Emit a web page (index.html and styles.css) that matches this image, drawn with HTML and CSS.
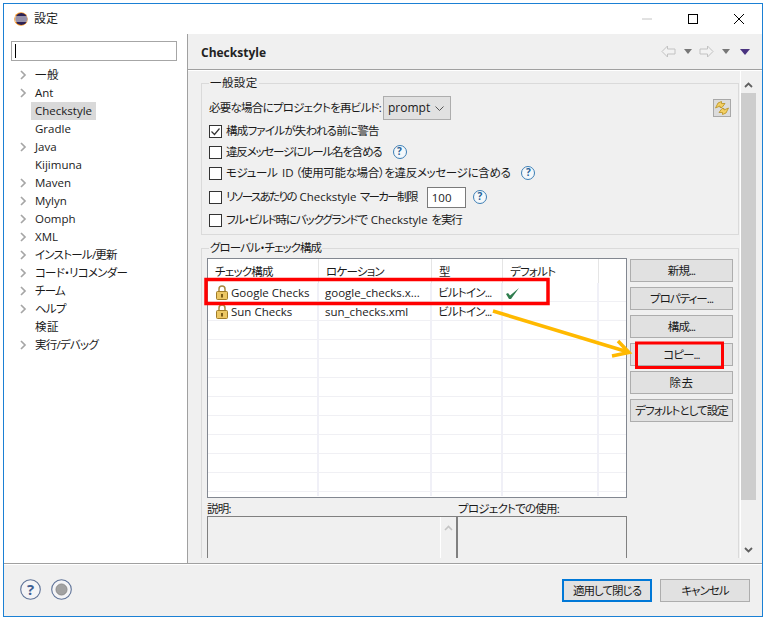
FILE: index.html
```html
<!DOCTYPE html>
<html lang="ja">
<head>
<meta charset="utf-8">
<title>設定</title>
<link rel="stylesheet" href="styles.css">
</head>
<body>
<div class="window">
  <header class="titlebar">
    <svg class="app-icon" viewBox="0 0 14 14"><circle cx="7" cy="7" r="6.8" fill="#f7941e"/><circle cx="7.3" cy="7" r="6" fill="#2c2255"/><path d="M1 5h12.4M1 7h12.6M1 9h12.4" stroke="#fff" stroke-width="1"/></svg>
    <span class="title">設定</span>
    <div class="controls">
      <span class="ctl"><svg viewBox="0 0 12 12"><path d="M1 6h10" stroke="#c4c4c4"/></svg></span>
      <span class="ctl"><svg viewBox="0 0 12 12"><rect x="1.5" y="1.5" width="9" height="9" fill="none" stroke="#000"/></svg></span>
      <span class="ctl"><svg viewBox="0 0 12 12"><path d="M1 1l10 10M11 1L1 11" stroke="#000" fill="none"/></svg></span>
    </div>
  </header>
  <div class="main">
    <aside class="sidebar">
      <div class="filter"><span class="caret"></span></div>
      <ul class="tree">
        <li class="node has"><svg class="chev" viewBox="0 0 7 10"><path d="M1 1l4 4-4 4" /></svg><span class="k">一般</span></li>
        <li class="node has"><svg class="chev" viewBox="0 0 7 10"><path d="M1 1l4 4-4 4" /></svg><span>Ant</span></li>
        <li class="node"><span class="sel">Checkstyle</span></li>
        <li class="node"><span>Gradle</span></li>
        <li class="node has"><svg class="chev" viewBox="0 0 7 10"><path d="M1 1l4 4-4 4" /></svg><span>Java</span></li>
        <li class="node"><span>Kijimuna</span></li>
        <li class="node has"><svg class="chev" viewBox="0 0 7 10"><path d="M1 1l4 4-4 4" /></svg><span>Maven</span></li>
        <li class="node has"><svg class="chev" viewBox="0 0 7 10"><path d="M1 1l4 4-4 4" /></svg><span>Mylyn</span></li>
        <li class="node has"><svg class="chev" viewBox="0 0 7 10"><path d="M1 1l4 4-4 4" /></svg><span>Oomph</span></li>
        <li class="node has"><svg class="chev" viewBox="0 0 7 10"><path d="M1 1l4 4-4 4" /></svg><span>XML</span></li>
        <li class="node has"><svg class="chev" viewBox="0 0 7 10"><path d="M1 1l4 4-4 4" /></svg><span class="j">インストール/更新</span></li>
        <li class="node has"><svg class="chev" viewBox="0 0 7 10"><path d="M1 1l4 4-4 4" /></svg><span class="j">コード・リコメンダー</span></li>
        <li class="node has"><svg class="chev" viewBox="0 0 7 10"><path d="M1 1l4 4-4 4" /></svg><span class="j">チーム</span></li>
        <li class="node has"><svg class="chev" viewBox="0 0 7 10"><path d="M1 1l4 4-4 4" /></svg><span class="j">ヘルプ</span></li>
        <li class="node"><span class="k">検証</span></li>
        <li class="node has"><svg class="chev" viewBox="0 0 7 10"><path d="M1 1l4 4-4 4" /></svg><span class="j">実行/デバッグ</span></li>
      </ul>
    </aside>
    <section class="panel">
      <div class="panel-head">
        <h1>Checkstyle</h1>
        <div class="nav">
          <svg class="nav-arrow" viewBox="0 0 15 13"><path d="M6.5 1L1 6.5 6.5 12V9H14V4H6.5z" /></svg>
          <svg class="nav-drop" viewBox="0 0 8 5"><path d="M0 0h8L4 5z"/></svg>
          <svg class="nav-arrow right" viewBox="0 0 15 13"><path d="M8.5 1L14 6.5 8.5 12V9H1V4H8.5z" /></svg>
          <svg class="nav-drop" viewBox="0 0 8 5"><path d="M0 0h8L4 5z"/></svg>
          <svg class="nav-menu" viewBox="0 0 10 6"><path d="M0 0h10L5 6z"/></svg>
        </div>
      </div>
      <div class="panel-body">
        <div class="scroll-area">
          <fieldset class="group">
            <legend class="k">一般設定</legend>
            <div class="row row-select">
              <label class="j prompt-label">必要な場合にプロジェクトを再ビルド:</label>
              <span class="select">prompt<svg viewBox="0 0 9 5"><path d="M.5.5l4 4 4-4" fill="none" stroke="#555"/></svg></span>
              <span class="refresh"><svg viewBox="0 0 16 16"><path d="M1.500 8L4 3l3.500-1.500v2H11L8 7.500H6V6z" fill="#f3cf63" stroke="#b8901f" stroke-width=".8"/><path d="M14.500 8L12 13l-3.500 1.500v-2H5L8 8.500h2V10z" fill="#f3cf63" stroke="#b8901f" stroke-width=".8"/></svg></span>
            </div>
            <div class="row"><span class="cb checked"><svg viewBox="0 0 11 11"><path d="M1.500 5.500l3 3 5-6" fill="none" stroke="#333" stroke-width="1.200"/></svg></span><span class="j">構成ファイルが失われる前に警告</span></div>
            <div class="row"><span class="cb"></span><span class="j tight">違反メッセージにルール名を含める</span><span class="q q1">?</span></div>
            <div class="row"><span class="cb"></span><span class="j loose">モジュール <span class="l">ID</span>（使用可能な場合）を違反メッセージに含める</span><span class="q q1">?</span></div>
            <div class="row row-limit"><span class="cb"></span><span class="j tighter">リソースあたりの <span class="l">Checkstyle</span> マーカー制限</span><span class="num">100</span><span class="q q2">?</span></div>
            <div class="row row-last"><span class="cb"></span><span class="j snug">フル・ビルド時にバックグランドで <span class="l">Checkstyle</span> を実行</span></div>
          </fieldset>
          <fieldset class="group group-global">
            <legend class="snug">グローバル・チェック構成</legend>
            <div class="table-row">
              <div class="table-box">
                <table>
                  <colgroup><col class="c1"><col class="c2"><col class="c3"><col class="c4"><col class="c5"></colgroup>
                  <thead><tr><th class="j">チェック構成</th><th class="j">ロケーション</th><th class="j">型</th><th class="j">デフォルト</th><th></th></tr></thead>
                  <tbody>
                    <tr><td><span class="name"><svg class="lock" viewBox="0 0 12 15"><path d="M3 7V4a3 3 0 0 1 6 0v3" fill="none" stroke="#a8893f" stroke-width="1.500"/><rect x=".5" y="6.500" width="11" height="8" rx="1" fill="#ecc764" stroke="#a07c28"/><rect x="5" y="9" width="2" height="3.500" fill="#7a5c18"/></svg>Google Checks</span></td><td>google_checks.x...</td><td class="j">ビルトイン...</td><td><svg class="check" viewBox="0 0 15 13"><path d="M1 7l3 5h2L14 1 5 8.500 3 6z" fill="#2f7d4f"/></svg></td><td></td></tr>
                    <tr><td><span class="name"><svg class="lock" viewBox="0 0 12 15"><path d="M3 7V4a3 3 0 0 1 6 0v3" fill="none" stroke="#a8893f" stroke-width="1.500"/><rect x=".5" y="6.500" width="11" height="8" rx="1" fill="#ecc764" stroke="#a07c28"/><rect x="5" y="9" width="2" height="3.500" fill="#7a5c18"/></svg>Sun Checks</span></td><td>sun_checks.xml</td><td class="j">ビルトイン...</td><td></td><td></td></tr>
                    <tr><td></td><td></td><td></td><td></td><td></td></tr>
                    <tr><td></td><td></td><td></td><td></td><td></td></tr>
                    <tr><td></td><td></td><td></td><td></td><td></td></tr>
                    <tr><td></td><td></td><td></td><td></td><td></td></tr>
                    <tr><td></td><td></td><td></td><td></td><td></td></tr>
                    <tr><td></td><td></td><td></td><td></td><td></td></tr>
                    <tr><td></td><td></td><td></td><td></td><td></td></tr>
                    <tr><td></td><td></td><td></td><td></td><td></td></tr>
                    <tr><td></td><td></td><td></td><td></td><td></td></tr>
                    <tr class="filler"><td></td><td></td><td></td><td></td><td></td></tr>
                  </tbody>
                </table>
              </div>
              <div class="side-buttons">
                <button class="j">新規...</button>
                <button class="j">プロパティー...</button>
                <button class="j">構成...</button>
                <button class="j">コピー...</button>
                <button class="k">除去</button>
                <button class="j">デフォルトとして設定</button>
              </div>
            </div>
            <div class="details">
              <div class="detail detail-desc">
                <div class="detail-label j">説明:</div>
                <div class="detail-box"><span class="mini-bar"><svg viewBox="0 0 9 6"><path d="M1 5l3.500-3.500L8 5" fill="none" stroke="#c4c4c4" stroke-width="1.600"/></svg></span></div>
              </div>
              <div class="detail detail-use">
                <div class="detail-label j">プロジェクトでの使用:</div>
                <div class="detail-box"></div>
              </div>
            </div>
          </fieldset>
        </div>
        <div class="scrollbar">
          <svg viewBox="0 0 9 6"><path d="M1 5l3.500-3.500L8 5" fill="none" stroke="#606060" stroke-width="1.800"/></svg>
          <div class="thumb"></div>
          <svg viewBox="0 0 9 6"><path d="M1 1l3.500 3.500L8 1" fill="none" stroke="#606060" stroke-width="1.800"/></svg>
        </div>
      </div>
    </section>
  </div>
  <footer class="footer">
    <svg class="foot-icon" viewBox="0 0 21 21"><circle cx="10.500" cy="10.500" r="9.800" fill="#f4f4f6" stroke="#5f7398" stroke-width="1.100"/><text x="10.500" y="16" text-anchor="middle" class="foot-q">?</text></svg>
    <svg class="foot-icon" viewBox="0 0 21 21"><circle cx="10.500" cy="10.500" r="9.800" fill="#f4f4f6" stroke="#5f7398" stroke-width="1.100"/><circle cx="10.500" cy="10.500" r="5.500" fill="#a2a2a2" stroke="#8c8c8c"/></svg>
    <div class="foot-buttons">
      <button class="primary j">適用して閉じる</button>
      <button class="j">キャンセル</button>
    </div>
  </footer>
</div>
<svg class="annotations" viewBox="0 0 767 622">
  <rect x="206" y="279.500" width="342" height="24" fill="none" stroke="#f00" stroke-width="3.500"/>
  <rect x="636.500" y="343" width="86" height="24.500" fill="none" stroke="#f00" stroke-width="3"/>
  <path d="M493 311L628 352M618 341L629 352.500L612 356" fill="none" stroke="#ffb900" stroke-width="3.500"/>
</svg>
</body>
</html>
```
FILE: styles.css
```css
* { box-sizing: border-box; }
html, body { margin: 0; padding: 0; }
body {
  position: relative;
  width: 767px;
  height: 622px;
  background: #fff;
  overflow: hidden;
  font-family: "Open Sans", "Noto Sans CJK JP", sans-serif;
  font-size: 11.500px;
  font-feature-settings: "palt";
  color: #1a1a1a;
  line-height: 16px;
}
.j { letter-spacing: -.75px; }
.k { letter-spacing: .4px; }
.j.tight { letter-spacing: -1.200px; }
.j.loose { letter-spacing: -.35px; }
.j.tighter { letter-spacing: -1.600px; }
.snug { letter-spacing: -.95px; }
.j.snug { letter-spacing: -1.150px; }
.j .l { letter-spacing: 0; margin: 0 2px; }
.window {
  margin: 3px 0 0 3px;
  width: 760px;
  height: 614px;
  border: 1px solid #1b80d4;
  display: flex;
  flex-direction: column;
  background: #f0f0f0;
}
.titlebar {
  height: 30px;
  background: #fff;
  display: flex;
  align-items: center;
  padding-left: 10px;
  flex: none;
}
.app-icon { width: 14px; height: 14px; }
.title { margin-left: 6px; font-size: 12px; }
.controls { margin-left: auto; display: flex; }
.ctl { width: 46px; height: 30px; display: flex; align-items: center; justify-content: center; }
.ctl svg { width: 12px; height: 12px; }
.main { height: 529px; flex: none; display: flex; }
.sidebar {
  width: 184px;
  background: #fff;
  border-right: 1px solid #a0a0a0;
  padding: 7px 0 0 7px;
  flex: none;
}
.filter {
  width: 166px;
  height: 20px;
  border: 1px solid #a6a6a6;
  padding: 2px 0 0 3px;
  background: #fff;
}
.caret { display: block; width: 1px; height: 14px; background: #000; }
.tree { list-style: none; margin: 5px 0 0; padding: 0; }
.node { height: 18px; display: flex; align-items: center; padding-left: 24px; }
.node.has { padding-left: 9px; }
.chev { width: 7px; height: 10px; margin-right: 8px; fill: none; stroke: #a6a6a6; stroke-width: 1.700; }
.sel { background: #d9d9d9; margin-left: -4px; padding: 1px 4px; }
.panel { flex: 1; display: flex; flex-direction: column; min-width: 0; }
.panel-head {
  height: 36px;
  flex: none;
  display: flex;
  align-items: center;
  padding: 3px 12px 0 13px;
  border-bottom: 1px solid #a0a0a0;
}
.panel-head h1 { margin: 0; font-size: 12px; font-weight: 700; color: #222; }
.nav { margin-left: auto; margin-top: -3px; display: flex; align-items: center; }
.nav-arrow { width: 15px; height: 13px; fill: #f2f2f2; stroke: #c2c2c2; }
.nav-drop { width: 8px; height: 5px; fill: #777; margin: 0 7px 0 8px; }
.nav-menu { width: 10px; height: 6px; fill: #4a3380; margin-left: 3px; }
.panel-body { height: 488px; flex: none; border-top: 1px solid #fff; display: flex; overflow: hidden; }
.scroll-area { width: 552px; padding: 4px 1px 0 13px; flex: none; overflow: hidden; }
.scrollbar {
  width: 16px;
  border-left: 1px solid #fff;
  display: flex;
  flex-direction: column;
  align-items: center;
  padding-top: 11px;
}
.scrollbar svg { width: 9px; height: 6px; flex: none; }
.thumb { width: 15px; height: 407px; background: #cdcdcd; margin: 5px 0 47px; flex: none; }
.group {
  margin: 0;
  padding: 5px 7px 4px 7px;
  border: 1px solid #dadada;
  min-width: 0;
}
.group legend { margin-left: 0; padding: 0 1px; height: 16px; }
.group-global { margin-top: 5px; padding: 2px 5px 0; height: 400px; }
.group-global legend { margin-left: 2px; }
.row { display: flex; align-items: center; height: 20px; margin-top: 1px; white-space: nowrap; }
.row-select { height: 24px; margin-top: 0; }
.row-limit { margin-top: 4px; }
.row-last { margin-top: 3px; }
.prompt-label { width: 174px; flex: none; }
.select {
  width: 68px;
  height: 24px;
  background: #e1e1e1;
  border: 1px solid #adadad;
  display: flex;
  align-items: center;
  justify-content: space-between;
  padding: 0 6px 0 4px;
  font-size: 12px;
}
.select svg { width: 9px; height: 5px; }
.refresh {
  margin-left: auto;
  width: 18px;
  height: 18px;
  background: #dcdcdc;
  border: 1px solid #a8a8a8;
  display: flex;
}
.refresh svg { width: 16px; height: 16px; }
.cb {
  width: 13px;
  height: 13px;
  border: 1px solid #333;
  background: #fff;
  margin: 0 4px 0 0;
  flex: none;
  display: flex;
}
.cb svg { width: 11px; height: 11px; }
.q {
  width: 14px;
  height: 14px;
  border: 1.500px solid #3d7fb5;
  border-radius: 50%;
  color: #1f5f96;
  background: #f4f8fb;
  font-weight: 700;
  font-size: 10px;
  line-height: 11px;
  text-align: center;
  flex: none;
}
.q1 { margin-left: 11px; }
.q2 { margin-left: 7px; }
.num {
  width: 39px;
  height: 21px;
  border: 1px solid #7a7a7a;
  background: #fff;
  margin-left: 10px;
  padding: 2px 0 0 4px;
}
.table-row { display: flex; gap: 3px; }
.table-box {
  width: 420px;
  height: 240px;
  border: 1px solid #828790;
  background: #fff;
  overflow: hidden;
  flex: none;
}
table { border-collapse: separate; border-spacing: 0; table-layout: fixed; width: 418px; }
.c1 { width: 111px; } .c2 { width: 113px; } .c3 { width: 71px; } .c4 { width: 96px; } .c5 { width: 27px; }
th {
  height: 24px;
  font-weight: 400;
  text-align: left;
  padding: 1px 0 0 7px;
  border-right: 1px solid #e5e5e5;
}
th:last-child { border-right: 0; }
td {
  height: 19px;
  padding: 2px 0 0 6px;
  border-right: 2px solid #f0f0f7;
  border-bottom: 1px solid #f0f0f4;
  white-space: nowrap;
  overflow: hidden;
  vertical-align: middle;
}
td:last-child { border-right: 0; }
.filler td { height: 4px; padding: 0; border-bottom: 0; }
.name { display: flex; align-items: center; padding-left: 2px; gap: 3px; height: 15px; }
.lock { width: 12px; height: 15px; flex: none; margin-top: -1px; }
.check { width: 15px; height: 13px; display: block; margin: 0 0 0 -4px; }
.side-buttons { display: flex; flex-direction: column; gap: 5px; margin-top: 1px; }
button {
  font: inherit;
  color: inherit;
  background: #e1e1e1;
  border: 1px solid #adadad;
  padding: 0;
  border-radius: 0;
  height: 23px;
  width: 103px;
  white-space: nowrap;
}
button.j { letter-spacing: -.95px; }
.details { display: flex; margin-top: 4px; }
.detail-label { height: 14px; line-height: 14px; }
.detail-box { height: 60px; border: 1px solid #808080; display: flex; justify-content: flex-end; }
.detail-desc { width: 251px; }
.detail-desc .detail-box { border-right-width: 2px; }
.detail-use { width: 169px; }
.detail-use .detail-box { border-left: 0; }
.mini-bar { width: 16px; border-left: 1px solid #fff; display: flex; justify-content: center; padding-top: 8px; }
.mini-bar svg { width: 9px; height: 6px; }
.footer {
  height: 53px;
  flex: none;
  border-top: 1px solid #a0a0a0;
  box-shadow: inset 0 1px 0 #fff;
  display: flex;
  align-items: flex-start;
  padding: 15px 0 0 16px;
}
.foot-icon { width: 21px; height: 21px; margin-right: 10px; }
.foot-q { font-size: 15px; font-weight: 700; fill: #3f5f94; font-family: "Open Sans", sans-serif; }
.foot-buttons { margin-left: auto; margin-right: 12px; display: flex; gap: 8px; }
.foot-buttons button { width: 90px; height: 23px; }
.foot-buttons .primary { border: 2px solid #0078d7; }
.annotations { position: absolute; left: 0; top: 0; width: 767px; height: 622px; pointer-events: none; }
```
